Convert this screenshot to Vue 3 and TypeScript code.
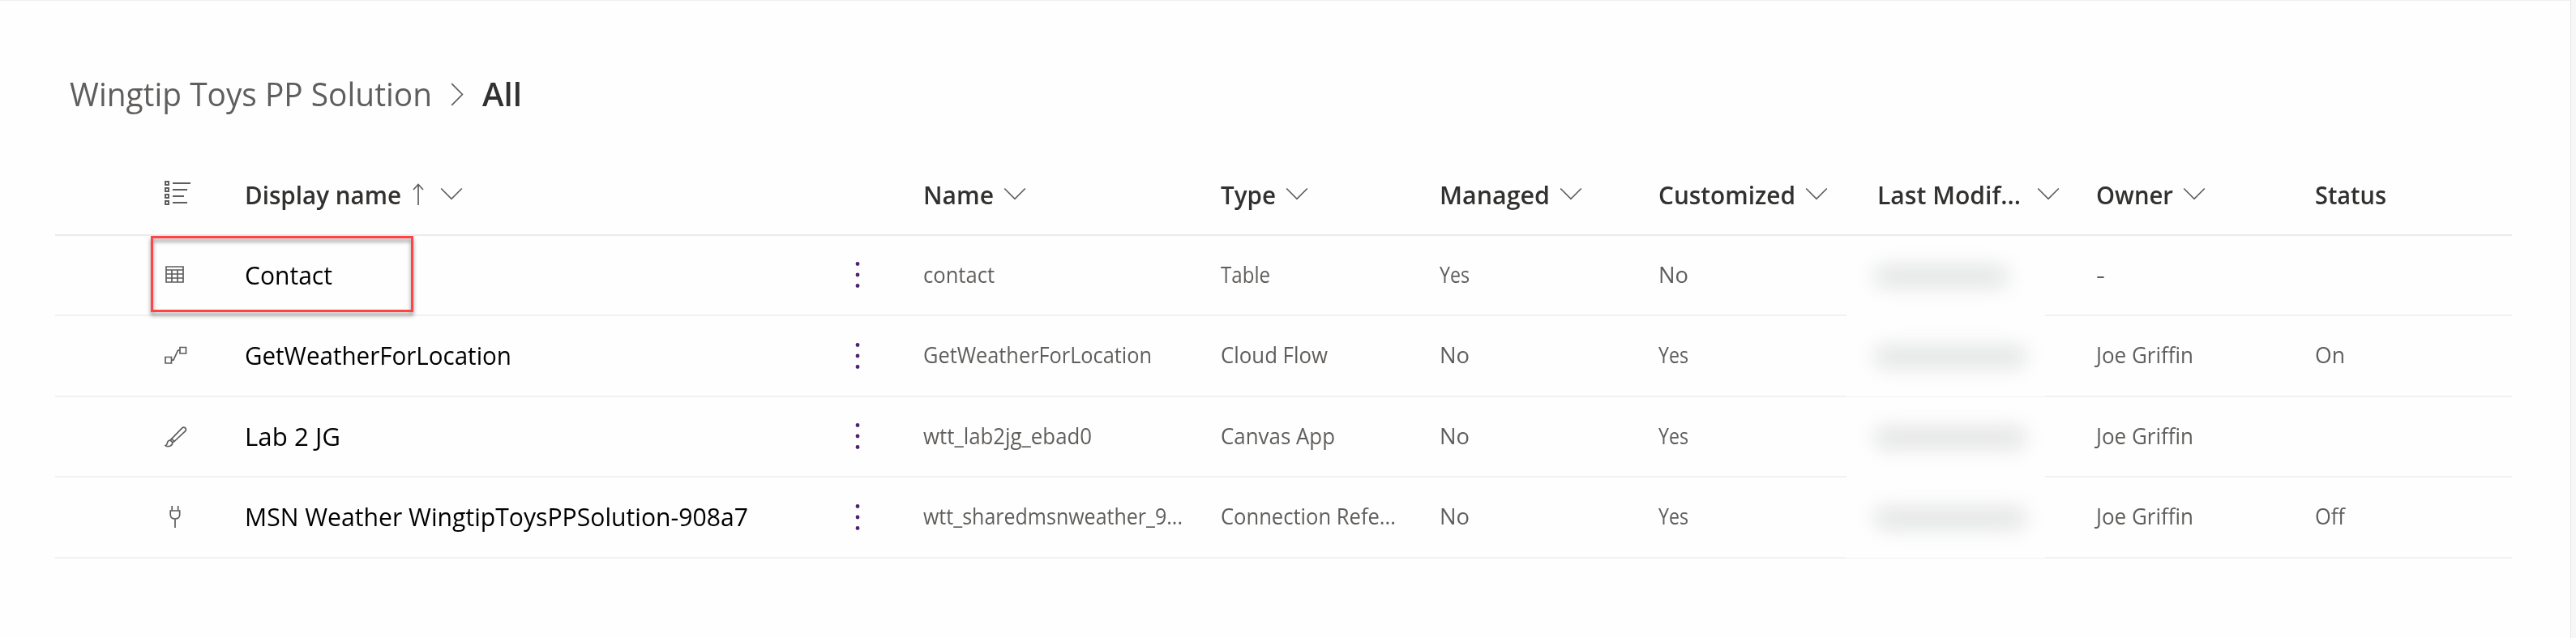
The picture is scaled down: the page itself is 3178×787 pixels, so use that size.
<script setup lang="ts">
import type { Directive } from 'vue'

interface Label {
  text: string
  width: number
}

interface Column extends Label {
  key: string
  menu: boolean
  sorted?: boolean
  menuGap?: number
}

interface Component {
  icon: 'table' | 'flow' | 'brush' | 'plug'
  display: Label
  name: Label
  type: Label
  managed: Label
  customized: Label
  modifiedWidth: number
  owner: Label
  status: Label
}

const l = (text: string, width: number): Label => ({ text, width })

// Condenses or expands a label so that it fills its allotted width.
const vFit: Directive<HTMLElement, number> = {
  mounted(el, binding) {
    const natural = el.getBoundingClientRect().width
    if (natural > 0 && binding.value > 0) {
      el.style.transform = `scaleX(${binding.value / natural})`
      el.style.marginRight = `${binding.value - natural}px`
    }
  },
}

const columns: Column[] = [
  { key: 'display', text: 'Display name', width: 193, menu: true, sorted: true },
  { key: 'name', text: 'Name', width: 87, menu: true },
  { key: 'type', text: 'Type', width: 68, menu: true },
  { key: 'managed', text: 'Managed', width: 136, menu: true },
  { key: 'customized', text: 'Customized', width: 169, menu: true },
  { key: 'modified', text: 'Last Modif...', width: 177, menu: true, menuGap: 20 },
  { key: 'owner', text: 'Owner', width: 95, menu: true },
  { key: 'status', text: 'Status', width: 88, menu: false },
]

const components: Component[] = [
  {
    icon: 'table', display: l('Contact', 108), name: l('contact', 88), type: l('Table', 61),
    managed: l('Yes', 37), customized: l('No', 37), modifiedWidth: 164, owner: l('-', 11), status: l('', 0),
  },
  {
    icon: 'flow', display: l('GetWeatherForLocation', 329), name: l('GetWeatherForLocation', 282), type: l('Cloud Flow', 132),
    managed: l('No', 37), customized: l('Yes', 37), modifiedWidth: 186, owner: l('Joe Griffin', 120), status: l('On', 37),
  },
  {
    icon: 'brush', display: l('Lab 2 JG', 118), name: l('wtt_lab2jg_ebad0', 208), type: l('Canvas App', 141),
    managed: l('No', 37), customized: l('Yes', 37), modifiedWidth: 186, owner: l('Joe Griffin', 120), status: l('', 0),
  },
  {
    icon: 'plug', display: l('MSN Weather WingtipToysPPSolution-908a7', 621), name: l('wtt_sharedmsnweather_9...', 320), type: l('Connection Refe...', 216),
    managed: l('No', 37), customized: l('Yes', 37), modifiedWidth: 186, owner: l('Joe Griffin', 120), status: l('Off', 37),
  },
]
</script>

<template>
  <main class="page">
    <nav class="crumbs">
      <span v-fit="447" class="fit">Wingtip Toys PP Solution</span>
      <svg class="crumb-arrow" width="16" height="29" viewBox="0 0 16 29"><path d="M1.2 1.2 14.4 14.5 1.2 27.8" /></svg>
      <strong v-fit="49" class="fit">All</strong>
    </nav>

    <section class="grid">
      <header class="row head">
        <div class="icon">
          <svg width="34" height="32" viewBox="0 0 34 32">
            <g class="line thick">
              <path d="M1 1h4v4H1zM1 9h4v4H1zM1 17h4v4H1zM1 25h4v4H1z" />
              <path d="M10 3h22M10 11h18M10 19h14M10 27h18" />
            </g>
          </svg>
        </div>
        <div v-for="c in columns" :key="c.key" class="cell" :class="c.key">
          <span v-fit="c.width" class="fit">{{ c.text }}</span>
          <svg v-if="c.sorted" class="sort" width="14" height="28" viewBox="0 0 14 28">
            <path d="M7 27V1.5M1 8l6-6.5L13 8" />
          </svg>
          <svg v-if="c.menu" class="menu" :class="{ after: c.sorted, wide: c.menuGap }" width="28" height="16" viewBox="0 0 28 16">
            <path d="M1.2 1.5 14 14.3 26.8 1.5" />
          </svg>
        </div>
      </header>

      <article v-for="(item, i) in components" :key="item.icon" class="row" :class="{ tall: i % 2 === 1 }">
        <div class="icon">
          <svg v-if="item.icon === 'table'" width="28" height="28" viewBox="0 0 28 28">
            <path class="line" d="M2 3h21v19H2zM2 7h21M2 12h21M2 17h21M9 7v15M16 7v15" />
          </svg>
          <svg v-else-if="item.icon === 'flow'" width="28" height="28" viewBox="0 0 28 28">
            <path class="line" d="M1 15.500h7.5v7.5H1zM19 3.500h7.5v7.5H19zM8.500 19.200h2.500L16.500 7.200H19" />
          </svg>
          <svg v-else-if="item.icon === 'brush'" width="28" height="28" viewBox="0 0 28 28">
            <path class="line" d="M8.700 16.300 21.500 3.200Q23.600 1.300 25.500 2.900Q27.300 4.900 25.500 6.900L12 19.500M6.900 18Q3.600 18.600 3.200 22Q3 24.200 1 24.600Q3.500 26.300 6.700 25.300Q10 24 9.800 20.700ZM6.900 18l1.800-1.700L12 19.500l-2.200 1.200" />
          </svg>
          <svg v-else width="28" height="28" viewBox="0 0 28 28">
            <path class="line" d="M9.200 0v6M16.700 0v6M7.200 6h11.500v4.500Q18.700 16 13 16Q7.200 16 7.200 10.500ZM13 16v11" />
          </svg>
        </div>
        <div class="cell display">
          <span v-fit="item.display.width" class="fit">{{ item.display.text }}</span>
          <svg class="more" width="6" height="34" viewBox="0 0 6 34">
            <circle cx="3" cy="3.500" r="2.400" /><circle cx="3" cy="17" r="2.400" /><circle cx="3" cy="30.500" r="2.400" />
          </svg>
        </div>
        <div class="cell"><span v-fit="item.name.width" class="fit">{{ item.name.text }}</span></div>
        <div class="cell"><span v-fit="item.type.width" class="fit">{{ item.type.text }}</span></div>
        <div class="cell"><span v-fit="item.managed.width" class="fit">{{ item.managed.text }}</span></div>
        <div class="cell"><span v-fit="item.customized.width" class="fit">{{ item.customized.text }}</span></div>
        <div class="redacted"><span class="smudge" :style="{ width: item.modifiedWidth + 'px' }"></span></div>
        <div class="cell"><span v-fit="item.owner.width" class="fit">{{ item.owner.text }}</span></div>
        <div class="cell"><span v-fit="item.status.width" class="fit">{{ item.status.text }}</span></div>
        <div v-if="i === 0" class="callout"></div>
      </article>
    </section>
  </main>
</template>

<style>
body {
  margin: 0;
  background: #f7f7f7;
}
</style>

<style scoped>
.page {
  box-sizing: border-box;
  width: 3172px;
  height: 787px;
  border-top: 1px solid #efefef;
  border-right: 1px solid #e6e6e6;
  background: #fefefe;
  font-family: "Open Sans", "Noto Sans", sans-serif;
  overflow: hidden;
}

.fit {
  display: inline-block;
  flex: none;
  transform-origin: 0 50%;
  white-space: pre;
}

.crumbs {
  display: flex;
  align-items: center;
  height: 60px;
  padding: 85px 0 0 86px;
  color: #605e5c;
  font-size: 39.5px;
  line-height: 60px;
}

.crumbs strong {
  color: #323130;
  font-weight: 600;
}

.crumb-arrow {
  margin: 0 23px 0 23px;
}

svg {
  display: block;
  flex: none;
  fill: none;
  stroke: #605e5c;
  stroke-width: 1.7;
}

.grid {
  width: 3031px;
  margin: 44px 0 0 68px;
}

.row {
  position: relative;
  display: grid;
  grid-template-columns: 97px 838px 367px 270px 270px 270px 270px 270px 244px;
  box-sizing: border-box;
  height: 99px;
  padding-left: 135px;
  border-bottom: 2px solid #f1f1f1;
  color: #605e5c;
  font-size: 27.5px;
}

.row.tall {
  height: 100px;
}

.row.head {
  height: 101px;
  border-bottom-color: #ebebeb;
  color: #323130;
  font-size: 31.5px;
  font-weight: 600;
}

.icon,
.cell {
  display: flex;
  align-items: center;
  min-width: 0;
}

.cell {
  box-sizing: border-box;
  padding: 0 0 3px 1px;
}

.cell.display {
  padding: 0 0 3px 2px;
}

.head .cell {
  padding-bottom: 0;
}

.head .icon {
  padding-bottom: 2px;
}

.row:not(.head) .display {
  justify-content: space-between;
  padding-right: 77px;
  color: #000;
  font-size: 31.5px;
}

.line {
  stroke-width: 1.7;
}

.thick {
  stroke-width: 2;
}

.sort {
  margin: 1px 0 0 14px;
}

.menu {
  margin: 0 0 2px 12px;
}

.menu.after {
  margin-left: 20px;
}

.menu.wide {
  margin-left: 20px;
}

.more {
  margin-top: 2px;
  fill: #4f2170;
  stroke: none;
}

.redacted {
  display: flex;
  align-items: center;
  width: 245px;
  height: 74px;
  margin: 25px 0 -2px -37px;
  background: #fefefe;
  z-index: 1;
}

.smudge {
  height: 26px;
  margin: 0 0 24px 35px;
  border-radius: 10px;
  background: #e2e3e3;
  filter: blur(12px);
}

.callout {
  position: absolute;
  left: 118px;
  top: 0;
  box-sizing: border-box;
  width: 324px;
  height: 94px;
  border: 3px solid #ff4444;
  filter: drop-shadow(0 4px 2.500px rgba(0, 0, 0, 0.45));
}
</style>
